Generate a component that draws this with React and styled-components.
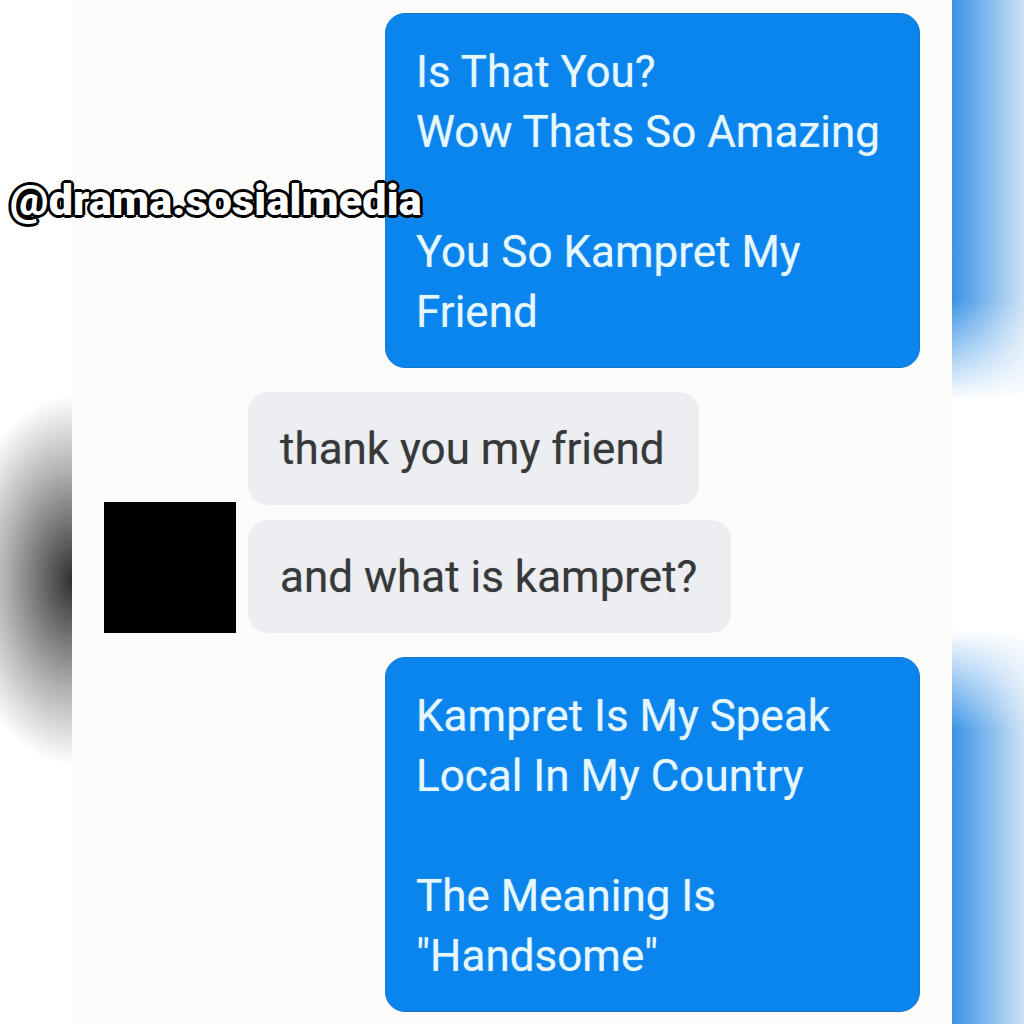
import React from "react";
import styled, { createGlobalStyle } from "styled-components";

const GlobalStyle = createGlobalStyle`
    html, body {
        margin: 0;
        padding: 0;
        background: #ffffff;
    }
    body {
        font-family: Roboto, "Liberation Sans", sans-serif;
    }
`;

const outgoingFirst = [
    "Is That You?",
    "Wow Thats So Amazing",
    "",
    "You So Kampret My",
    "Friend",
];

const outgoingSecond = [
    "Kampret Is My Speak",
    "Local In My Country",
    "",
    "The Meaning Is",
    "\"Handsome\"",
];

const App = () => {
    return (
        <>
            <GlobalStyle />
            <Frame>
                <LeftEdge />
                <ChatPanel>
                    <OutRow>
                        <BlueBubble>
                            {outgoingFirst.map((line, i) => (
                                <Line key={i}>{line || "\u00a0"}</Line>
                            ))}
                        </BlueBubble>
                    </OutRow>

                    <InGroup>
                        <Avatar />
                        <InStack>
                            <GrayBubble>thank you my friend</GrayBubble>
                            <GrayBubble>and what is kampret?</GrayBubble>
                        </InStack>
                    </InGroup>

                    <OutRow>
                        <BlueBubble>
                            {outgoingSecond.map((line, i) => (
                                <Line key={i}>{line || "\u00a0"}</Line>
                            ))}
                        </BlueBubble>
                    </OutRow>
                </ChatPanel>
                <RightEdge />
                <Watermark>@drama.sosialmedia</Watermark>
            </Frame>
        </>
    );
};

export default App;

const Frame = styled.div`
    position: relative;
    width: 1024px;
    height: 1024px;
    display: flex;
    overflow: hidden;
    background: #fcfdfb;
`;

// soft shadow that is darkest against the panel edge
const LeftEdge = styled.div`
    width: 72px;
    flex-shrink: 0;
    background:
        radial-gradient(
            ellipse 115px 185px at 74px 580px,
            rgba(0, 0, 0, 0.82) 0%,
            rgba(0, 0, 0, 0.6) 25%,
            rgba(0, 0, 0, 0.3) 60%,
            rgba(0, 0, 0, 0) 100%
        ),
        #ffffff;
`;

const RightEdge = styled.div`
    width: 72px;
    flex-shrink: 0;
    background:
        linear-gradient(
            to bottom,
            rgba(255, 255, 255, 0) 0px,
            rgba(255, 255, 255, 0) 300px,
            rgba(255, 255, 255, 1) 400px,
            rgba(255, 255, 255, 1) 630px,
            rgba(255, 255, 255, 0) 730px,
            rgba(255, 255, 255, 0) 1024px
        ),
        linear-gradient(to right, #3c93e6 0%, #6aaeec 35%, #a9cff2 75%, #cbe2f5 100%);
`;

const ChatPanel = styled.div`
    flex: 1;
    display: flex;
    flex-direction: column;
    gap: 24px;
    padding: 13px 32px 0 32px;
    background: #fcfdfb;
`;

const OutRow = styled.div`
    display: flex;
    justify-content: flex-end;
`;

const BlueBubble = styled.div`
    width: 535px;
    box-sizing: border-box;
    padding: 28px 30px 25px 30px;
    background: #0b85ee;
    border: 1px solid #1877cc;
    border-radius: 20px;
    color: #e6f7ff;
    font-family: Roboto, "Liberation Sans", sans-serif;
    font-size: 44px;
    line-height: 60px;
    text-shadow: 0 0 1px rgba(200, 240, 255, 0.6);
`;

const Line = styled.div`
    white-space: nowrap;
`;

const InGroup = styled.div`
    display: flex;
    align-items: flex-end;
    gap: 12px;
`;

const Avatar = styled.div`
    width: 132px;
    height: 131px;
    flex-shrink: 0;
    background: #000000;
`;

const InStack = styled.div`
    display: flex;
    flex-direction: column;
    align-items: flex-start;
    gap: 15px;
`;

const GrayBubble = styled.div`
    padding: 27px 34px 26px 32px;
    background: #eceef1;
    border-radius: 20px;
    color: #37383a;
    font-family: Roboto, "Liberation Sans", sans-serif;
    font-size: 44px;
    line-height: 60px;
    white-space: nowrap;
    text-shadow: 0 0 1px rgba(40, 40, 40, 0.4);
`;

const Watermark = styled.div`
    position: absolute;
    left: 10px;
    top: 175px;
    font-family: Roboto, "Liberation Sans", sans-serif;
    font-weight: 900;
    font-size: 43px;
    line-height: 50px;
    letter-spacing: 0.2px;
    color: #ffffff;
    white-space: nowrap;
    text-shadow:
        2px 0 0 #000, -2px 0 0 #000, 0 2px 0 #000, 0 -2px 0 #000,
        2px 2px 0 #000, -2px -2px 0 #000, 2px -2px 0 #000, -2px 2px 0 #000,
        3px 0 0 #000, -3px 0 0 #000, 0 3px 0 #000, 0 -3px 0 #000,
        0 0 4px rgba(255, 255, 255, 0.8);
`;
